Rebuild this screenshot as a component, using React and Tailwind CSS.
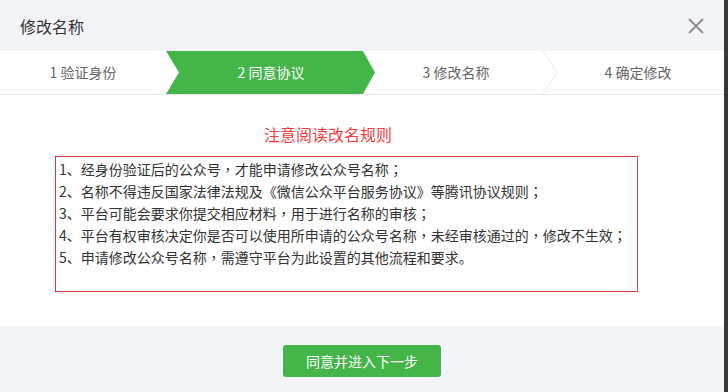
import React from "react";

const font = { fontFamily: '"Noto Sans CJK SC", "Microsoft YaHei", sans-serif' };
const tc = { fontFamily: '"Noto Sans CJK TC", sans-serif' };

const rules = [
  "1、经身份验证后的公众号，才能申请修改公众号名称；",
  "2、名称不得违反国家法律法规及《微信公众平台服务协议》等腾讯协议规则；",
  "3、平台可能会要求你提交相应材料，用于进行名称的审核；",
  "4、平台有权审核决定你是否可以使用所申请的公众号名称，未经审核通过的，修改不生效；",
  "5、申请修改公众号名称，需遵守平台为此设置的其他流程和要求。",
];

function Line({ text }) {
  const parts = text.split(/([，；])/);
  return (
    <div>
      {parts.map((p, i) =>
        p === "，" || p === "；" ? (
          <span key={i} style={tc}>{p}</span>
        ) : (
          <span key={i}>{p}</span>
        )
      )}
    </div>
  );
}

export default function App() {
  return (
    <div className="flex w-[728px] h-[392px] overflow-hidden" style={font}>
      <div className="w-[724px] flex flex-col bg-white">
        {/* header */}
        <div className="h-[51px] bg-[#f3f4f8] flex items-center justify-between pl-[20px] pr-[20px]">
          <span className="text-[16px] leading-[22px] text-[#353535]">修改名称</span>
          <svg width="16" height="16" viewBox="0 0 16 16">
            <path d="M1 1 L15 15 M15 1 L1 15" stroke="#8d8d8d" strokeWidth="2" />
          </svg>
        </div>
        {/* steps */}
        <div className="h-[43px] flex text-[14px] text-[#666]">
          <div className="w-[166px] flex items-center justify-center">1 验证身份</div>
          <div
            className="w-[209px] bg-[#44b549] text-white flex items-center justify-center pl-[13px] pr-[12px]"
            style={{ clipPath: "polygon(0 0, 197px 0, 209px 50%, 197px 100%, 0 100%, 13px 50%)" }}
          >
            2 同意协议
          </div>
          <div className="w-[180px] -ml-[12px] flex items-center justify-center pl-[6px]">3 修改名称</div>
          <div className="relative w-[181px] flex items-center justify-center pl-[9px]">
            <svg className="absolute left-0 top-0" width="15" height="43" viewBox="0 0 15 43">
              <path d="M0 0 L14 21.5 L0 43" stroke="#e6e6e6" strokeWidth="1" fill="none" />
            </svg>
            4 确定修改
          </div>
        </div>
        <div className="h-px bg-[#e7e7eb]" />
        {/* body */}
        <div className="h-[231px] bg-white pt-[28px]">
          <div className="pl-[264px] text-[16px] leading-[22px] text-[#fa3a3a]">注意阅读改名规则</div>
          <div className="ml-[55px] mt-[11px] w-[583px] h-[136px] border border-[#e8373b] pt-px pl-[3px] text-[14px] leading-[22px] text-[#333]">
            {rules.map((r) => (
              <Line key={r} text={r} />
            ))}
          </div>
        </div>
        {/* footer */}
        <div className="flex-1 bg-[#f3f4f8] flex justify-center pt-[19px]">
          <button className="w-[158px] h-[32px] rounded-[3px] bg-[#44b549] text-white text-[14px] leading-[32px]">
            同意并进入下一步
          </button>
        </div>
      </div>
      <div className="flex-1 bg-[#383838]" />
    </div>
  );
}
